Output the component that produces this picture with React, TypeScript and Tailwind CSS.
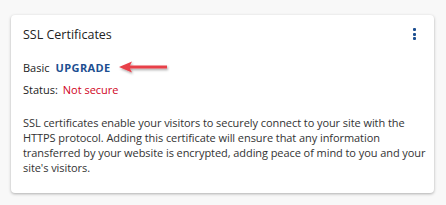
export default function App() {
  return (
    <div
      className="w-[446px] h-[205px] bg-[#f8f8f8] pt-[15px] pl-[11px]"
      style={{ fontFamily: '"Open Sans", sans-serif' }}
    >
      <div className="relative w-[423px] h-[178px] bg-white rounded-[4px] shadow-[0_1px_3px_rgba(0,0,0,0.3)] pl-[12px] pr-[8px] pt-[11px]">
        <div className="flex items-start justify-between">
          <h2 className="text-[12.5px] leading-[18px] text-[#222]">SSL Certificates</h2>
          <button className="mt-[2px] mr-[10px] flex flex-col gap-[1.5px] items-center">
            <span className="w-[3px] h-[3px] bg-[#1d4f91] rounded-[1px]" />
            <span className="w-[3px] h-[3px] bg-[#1d4f91] rounded-[1px]" />
            <span className="w-[3px] h-[3px] bg-[#1d4f91] rounded-[1px]" />
          </button>
        </div>
        <div className="mt-[16px] flex items-center text-[11px] leading-[16px] text-[#222]">
          <span>Basic</span>
          <span className="ml-[6px] font-bold tracking-[0.4px] text-[#1d4f91]">UPGRADE</span>
          <svg width="52" height="16" viewBox="0 0 52 16" className="ml-[7px]">
            <defs>
              <filter id="sh" x="-20%" y="-50%" width="140%" height="200%">
                <feDropShadow dx="1" dy="1.5" stdDeviation="1" floodColor="#000" floodOpacity="0.35" />
              </filter>
            </defs>
            <g filter="url(#sh)">
              <path d="M1 7 L14 1.5 L12 5.5 L49 5.5 L49 8.5 L12 8.5 L14 12.5 Z" fill="#e8414a" />
            </g>
          </svg>
        </div>
        <div className="mt-[6px] text-[11px] leading-[16px] text-[#222]">
          Status: <span className="ml-[2px] text-[#d0021b]">Not secure</span>
        </div>
        <p className="mt-[17px] text-[11px] leading-[15px] tracking-[-0.07px] text-[#333]">
          SSL certificates enable your visitors to securely connect to your site with the HTTPS protocol. Adding this certificate will ensure that any information transferred by your website is encrypted, adding peace of mind to you and your site's visitors.
        </p>
      </div>
    </div>
  );
}
